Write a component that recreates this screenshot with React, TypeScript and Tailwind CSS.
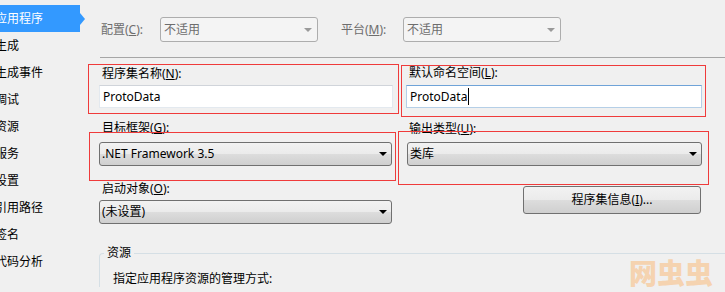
import React from 'react';

const navItems = ['应用程序', '生成', '生成事件', '调试', '资源', '服务', '设置', '引用路径', '签名', '代码分析'];

const DisabledSelect = ({ value }: { value: string }) => (
  <div className="flex items-center justify-between w-[158px] h-[25px] pl-[3px] pr-[5px] bg-[#f4f4f4] border border-[#adadad] rounded-[3px] text-[#6d6d6d]">
    <span>{value}</span>
    <span className="w-0 h-0 border-x-[4px] border-x-transparent border-t-[4px] border-t-[#9a9a9a]" />
  </div>
);

const Select = ({ value }: { value: string }) => (
  <div className="flex items-center justify-between h-[24px] pl-[2px] pr-[4px] border border-[#707070] rounded-[3px] bg-[linear-gradient(#f2f2f2_0%,#ebebeb_50%,#dddddd_50%,#cfcfcf_100%)] text-black">
    <span>{value}</span>
    <span className="w-0 h-0 border-x-[4px] border-x-transparent border-t-[4px] border-t-black" />
  </div>
);

const App = () => {
  return (
    <div className="relative flex w-[725px] h-[292px] overflow-hidden bg-[#f0f0f0] text-[12px] leading-[16px] text-black font-['Noto_Sans','Noto_Sans_CJK_SC',sans-serif]">
      {/* sidebar */}
      <div className="w-[90px] shrink-0 pt-[5px]">
        {navItems.map((item, i) => (
          <div key={item} className="relative w-[80px] h-[27px] flex items-center">
            {i === 0 && (
              <>
                <div className="absolute inset-0 bg-[#3399ff]" />
                <div className="absolute right-[-5px] top-[8px] w-0 h-0 border-y-[6px] border-y-transparent border-l-[5px] border-l-[#3399ff]" />
              </>
            )}
            <span className={`relative ml-[-5px] whitespace-nowrap ${i === 0 ? 'text-white' : 'text-black'}`}>{item}</span>
          </div>
        ))}
      </div>

      {/* main */}
      <div className="flex-1 pt-[17px] pl-[9px]">
        <div className="flex items-center h-[25px]">
          <div className="w-[61px] pl-[2px] text-[#6d6d6d]">配置(<u>C</u>):</div>
          <DisabledSelect value="不适用" />
          <div className="ml-[23px] w-[62px] text-[#6d6d6d]">平台(<u>M</u>):</div>
          <DisabledSelect value="不适用" />
        </div>

        <div className="mt-[15px] ml-[1px] h-px bg-[#a6a6a6]" />

        <div className="grid grid-cols-[294px_296px] gap-x-[13px]">
          <div className="pt-[8px] pl-[3px]">程序集名称(<u>N</u>):</div>
          <div className="pt-[7px] pl-[3px]">默认命名空间(<u>L</u>):</div>

          <div className="mt-[3px] h-[23px] flex items-center pl-[3px] bg-white border border-[#e3e9ef] border-t-[#d0d4da]">ProtoData</div>
          <div className="mt-[3px] h-[23px] flex items-center pl-[3px] bg-white border border-[#b5cfe7] border-t-[#6fa3d8]">
            ProtoData<span className="ml-[1px] w-px h-[17px] bg-black" />
          </div>

          <div className="pt-[12px] pl-[3px]">目标框架(<u>G</u>):</div>
          <div className="pt-[13px] pl-[3px]">输出类型(<u>U</u>):</div>

          <div className="mt-[5px] mr-[1px]"><Select value=".NET Framework 3.5" /></div>
          <div className="mt-[5px] ml-[1px]"><Select value="类库" /></div>

          <div className="pt-[15px] pl-[3px]">
            启动对象(<u>O</u>):
            <div className="mt-[3px] mr-[1px] ml-[-3px]"><Select value="(未设置)" /></div>
          </div>
          <div className="pt-[20px] flex justify-end">
            <button className="mr-[1px] w-[178px] h-[28px] border border-[#707070] rounded-[3px] bg-[linear-gradient(#f2f2f2_0%,#ebebeb_50%,#dddddd_50%,#cfcfcf_100%)]">
              程序集信息(<u>I</u>)...
            </button>
          </div>
        </div>

        <fieldset className="mt-[21px] border-t border-l border-[#d5dfe5] rounded-tl-[4px]">
          <legend className="ml-[4px] px-[3px]">资源</legend>
          <div className="pt-[10px] pl-[13px]">指定应用程序资源的管理方式:</div>
        </fieldset>
      </div>

      {/* annotation boxes */}
      <div className="absolute left-[88px] top-[64px] w-[311px] h-[50px] border border-[#ef3b3b]" />
      <div className="absolute left-[89px] top-[132px] w-[307px] h-[49px] border border-[#ef3b3b]" />
      <div className="absolute left-[401px] top-[65px] w-[305px] h-[52px] border border-[#ef3b3b]" />
      <div className="absolute left-[398px] top-[131px] w-[311px] h-[54px] border border-[#ef3b3b]" />

      {/* watermark */}
      <div className="absolute left-[629px] top-[257px] text-[28px] leading-[30px] font-black text-[#f5d3b0] font-['Noto_Sans_CJK_SC',sans-serif]">网虫虫</div>
    </div>
  );
};

export default App;
